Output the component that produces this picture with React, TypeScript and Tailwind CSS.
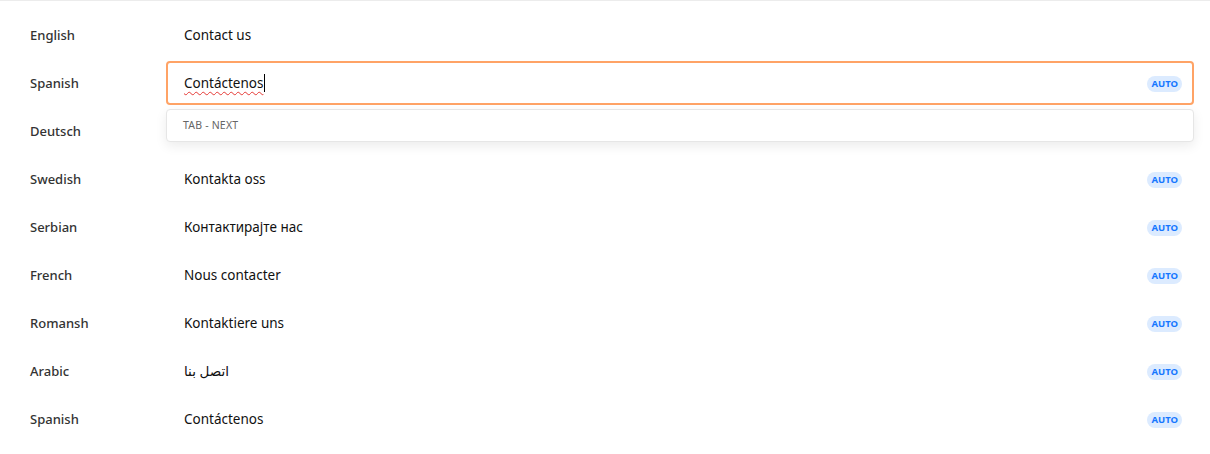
import React from 'react';

const rows = [
  { lang: 'English', value: 'Contact us', source: true },
  { lang: 'Spanish', value: 'Contáctenos', editing: true },
  { lang: 'Deutsch', value: '', hidden: true },
  { lang: 'Swedish', value: 'Kontakta oss' },
  { lang: 'Serbian', value: 'Контактирајте нас' },
  { lang: 'French', value: 'Nous contacter' },
  { lang: 'Romansh', value: 'Kontaktiere uns' },
  { lang: 'Arabic', value: 'اتصل بنا' },
  { lang: 'Spanish', value: 'Contáctenos' },
];

function AutoBadge() {
  return (
    <span className="mt-px rounded-full bg-[#dcebff] px-[4px] py-[2px] text-[9.5px] font-bold leading-[12px] text-[#1677ff]">
      AUTO
    </span>
  );
}

export default function App() {
  return (
    <div
      className="min-h-[454px] border-t border-[#ececec] bg-white pt-[10px]"
      style={{ fontFamily: '"Noto Sans", "DejaVu Sans", sans-serif' }}
    >
      {rows.map((row, i) => (
        <div key={i} className="relative flex h-12 items-center pl-[30px] pr-[16px]">
          <div className="w-[136px] pt-[2px] text-[13px] font-medium text-[#333]">{row.lang}</div>
          {row.editing ? (
            <div className="flex h-[44px] flex-1 items-center justify-between rounded-[4px] border-2 border-[#ffa366] pl-[16px] pr-[10px]">
              <span className="flex items-center text-[13.5px] text-[#111]">
                <span className="underline decoration-[#e53935] decoration-wavy decoration-1 underline-offset-[3px]">
                  {row.value}
                </span>
                <span className="ml-px h-[18px] w-px bg-black" />
              </span>
              <AutoBadge />
            </div>
          ) : (
            <div className="flex h-[44px] flex-1 items-center justify-between border-2 border-transparent pl-[16px] pr-[10px]">
              <span className="text-[13.5px] text-[#111]">{row.value}</span>
              {!row.source && !row.hidden && <AutoBadge />}
            </div>
          )}
          {row.editing && (
            <div className="absolute left-[166px] right-[16px] top-[50px] z-10 flex h-[33px] items-center rounded-[4px] border border-[#e6e6e6] bg-white pl-[16px] shadow-[0_4px_12px_rgba(0,0,0,0.08)]">
              <span className="text-[10.5px] tracking-[0.2px] text-[#666]">TAB - NEXT</span>
            </div>
          )}
        </div>
      ))}
    </div>
  );
}
